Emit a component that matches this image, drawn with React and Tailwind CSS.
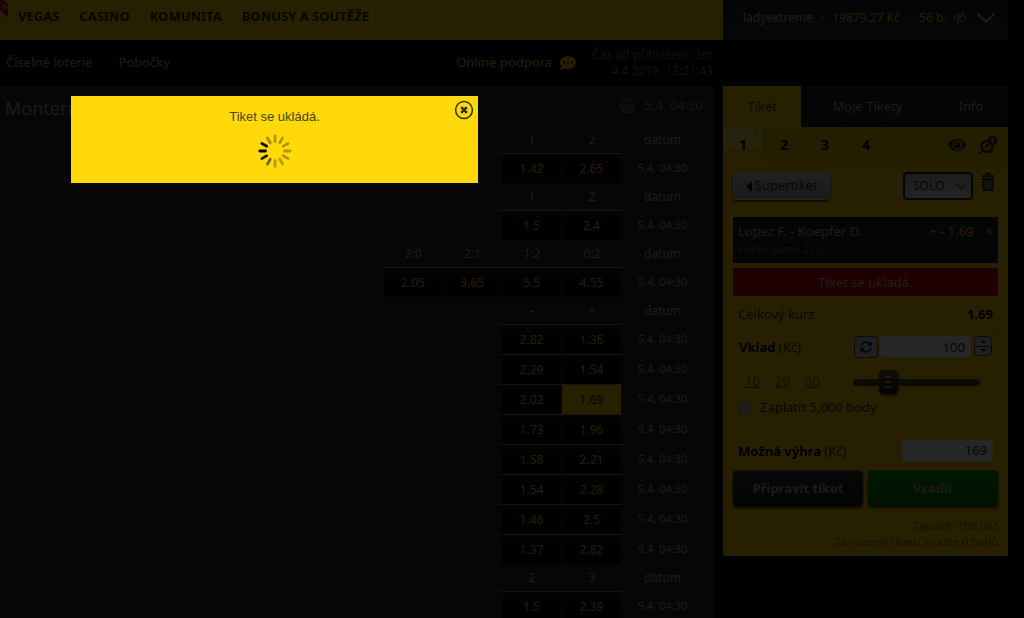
import React from 'react';
import { FaCommentDots, FaSyncAlt } from 'react-icons/fa';

const mainNav = ['VEGAS', 'CASINO', 'KOMUNITA', 'BONUSY A SOUTĚŽE'];
const subNav = ['Číselné loterie', 'Pobočky'];

// Each market has four odds columns, unused ones stay empty
const markets = [
  { heads: ['', '', '1', '2'], rows: [['', '', '1.42', '2.65']] },
  { heads: ['', '', '1', '2'], rows: [['', '', '1.5', '2.4']] },
  { heads: ['2:0', '2:1', '1:2', '0:2'], rows: [['2.05', '3.65', '5.5', '4.55']] },
  {
    heads: ['', '', '-', '+'],
    rows: [
      ['', '', '2.82', '1.36'],
      ['', '', '2.29', '1.54'],
      ['', '', '2.02', '1.69'],
      ['', '', '1.73', '1.96'],
      ['', '', '1.58', '2.21'],
      ['', '', '1.54', '2.28'],
      ['', '', '1.46', '2.5'],
      ['', '', '1.37', '2.82']
    ]
  },
  { heads: ['', '', '2', '3'], rows: [['', '', '1.5', '2.39']] }
];

const selectedOdd = '1.69';

// Opacity of the twelve spinner spokes, clockwise from the top
const spokes = [0.3, 0.3, 0.3, 0.3, 0.3, 0.3, 0.3, 0.55, 0.85, 1, 1, 0.35];

const Spinner = () => (
  <svg className="w-[34px] h-[34px]" viewBox="-16 -16 32 32" role="img" aria-label="Ukládá se">
    {spokes.map((opacity, i) => (
      <line
        key={i}
        x1="0"
        y1="-9"
        x2="0"
        y2="-14.3"
        stroke="#000"
        strokeWidth="2.6"
        strokeLinecap="round"
        strokeOpacity={opacity}
        transform={`rotate(${i * 30})`}
      />
    ))}
  </svg>
);

const EyeIcon = () => (
  <svg className="w-5 h-5" viewBox="0 0 20 20" fill="none">
    <path d="M0.5 10C3 5.6 6.3 3.6 10 3.6S17 5.6 19.5 10C17 14.4 13.7 16.4 10 16.4S3 14.4 0.5 10Z" fill="#3a3418" />
    <circle cx="10" cy="10" r="4.3" stroke="#b39a10" strokeWidth="1.7" />
    <circle cx="9" cy="9" r="1.3" fill="#b39a10" />
  </svg>
);

const PinIcon = () => (
  <svg className="w-5 h-5" viewBox="0 0 20 20" fill="none" stroke="#3a3418">
    <path d="M1.5 18.5 5.5 15" strokeWidth="2" strokeLinecap="round" />
    <circle cx="9" cy="11.3" r="5.6" strokeWidth="2.6" />
    <circle cx="14.5" cy="5.5" r="3.6" strokeWidth="2.4" fill="#b39a10" />
    <path d="M8.5 11.5 13 7" strokeWidth="2.6" strokeLinecap="round" />
  </svg>
);

const TrashIcon = () => (
  <svg className="w-[14px] h-5" viewBox="0 0 14 20" fill="none" stroke="#3a3418">
    <path d="M0 4.2H14M5 3V1.5H9V3" strokeWidth="1.8" />
    <path d="M2 7H12L11.2 18H2.8Z" strokeWidth="2" strokeLinejoin="round" fill="#a89850" />
    <path d="M5.3 8.5V16M8.7 8.5V16" strokeWidth="1.2" />
  </svg>
);

const HiddenIcon = () => (
  <svg className="w-[14px] h-[14px]" viewBox="0 0 14 14" fill="none" stroke="#999">
    <path d="M6.5 3.2C4 3.4 2 4.8 0.8 7C1.6 8.5 2.7 9.7 4.2 10.4M9.8 3.8C11.4 4.5 12.5 5.6 13.2 7C12 9.2 10 10.7 7.5 10.8" strokeWidth="1.5" />
    <path d="M10 0.8 4.4 13.2" strokeWidth="1.6" />
    <path d="M6.2 5C5 5.8 4.7 7.3 5.2 8.6" strokeWidth="1.8" />
  </svg>
);

const StatsIcon = () => (
  <svg className="w-4 h-4" viewBox="0 0 16 16" fill="none" stroke="#777">
    <circle cx="8" cy="8" r="6.8" strokeWidth="1.5" />
    <path d="M4.8 8V12M8 4V13M11.2 6.5V12" strokeWidth="2.2" />
  </svg>
);

const Header = () => (
  <header className="relative shrink-0 h-10 bg-[#ffd800] flex items-center pl-[18px] gap-5 text-[13px] font-bold text-[#332b00] pb-[6px]">
    {/* Ribbon of the previous menu item */}
    <svg className="absolute left-0 top-0 w-2 h-5 overflow-visible" viewBox="0 0 8 20">
      <path d="M0 0H4L8 4V18L0 10Z" fill="#d0102c" />
      <text x="0" y="0" fill="#ddd" fontSize="6" fontWeight="700" transform="translate(2 6) rotate(45)">w</text>
    </svg>
    {mainNav.map((item) => (
      <a key={item} href="#">{item}</a>
    ))}
  </header>
);

const SubHeader = () => (
  <div className="shrink-0 h-[46px] flex items-center justify-between pl-[6px] pr-[10px]">
    <nav className="flex gap-[26px] text-[13px] text-[#b0b0b0]">
      {subNav.map((item) => (
        <a key={item} href="#">{item}</a>
      ))}
    </nav>
    <div className="flex items-center gap-4">
      <a href="#" className="flex items-center gap-2 text-[13px] text-[#ffb900]">
        Online podpora
        <FaCommentDots className="w-4 h-4" />
      </a>
      <div className="text-right text-xs text-[#707070]">
        <p>Čas od přihlášení: 3m</p>
        <p>4.4.2019 &nbsp;13:21:43</p>
      </div>
    </div>
  </div>
);

const OddsCell = ({ value, selected }) => {
  if (!value) return <td className="border-t border-[#484848]"></td>;

  return (
    <td className={`p-0 border-t border-r border-t-[#8a8a8a] border-r-[#303030] ${selected ? 'bg-[#ffd800]' : 'bg-linear-to-b from-[#1c1c1c] to-black'}`}>
      <button type="button" className={`block w-full text-center ${selected ? 'text-[#333]' : 'text-[#ffb900]'}`}>
        {value}
      </button>
    </td>
  );
};

const Matches = () => (
  <section className="bg-[#2a2a2a] mr-[10px] pr-[10px] flex-1">
    <div className="h-10 flex items-center justify-between pl-[5px]">
      <h1 className="pt-1 text-lg text-[#b0b0b0]">Monterrey</h1>
      <div className="flex items-center gap-[10px] text-[13px] text-[#909090]">
        <StatsIcon />
        <span>5.4. 04:30</span>
      </div>
    </div>
    <table className="w-full table-fixed border-separate border-spacing-0 text-xs text-[#b8b8b8]">
      <colgroup>
        <col />
        <col className="w-[59px]" />
        <col className="w-[59px]" />
        <col className="w-[60px]" />
        <col className="w-[60px]" />
        <col className="w-[81px]" />
      </colgroup>
      {markets.map((market, m) => (
        <tbody key={m}>
          <tr className="h-[27px]">
            <td></td>
            {market.heads.map((head, i) => (
              <th key={i} className="p-0 font-normal">{head}</th>
            ))}
            <th className="p-0 font-normal">datum</th>
          </tr>
          {market.rows.map((row, r) => (
            <tr key={r} className="h-[30px] bg-linear-to-b from-[#262727] to-[#2a2a2a]">
              <td className="border-t border-[#484848]"></td>
              {row.map((value, i) => (
                <OddsCell key={i} value={value} selected={value === selectedOdd} />
              ))}
              <td className="p-0 border-t border-[#484848] text-center text-[11px]">5.4. 04:30</td>
            </tr>
          ))}
        </tbody>
      ))}
    </table>
  </section>
);

const UserBar = () => (
  <div className="h-10 bg-linear-to-b from-[#222] to-[#2c2e2e] flex items-center pl-5 pr-3 pb-1 text-xs text-[#ffb900]">
    <span className="text-[#c0c0c0]">ladyextreme</span>
    <span className="mx-2">·</span>
    <span>19879.27 Kč</span>
    <span className="mx-2">·</span>
    <span>56 b.</span>
    <button type="button" aria-label="Skrýt zůstatek" className="ml-[7px]">
      <HiddenIcon />
    </button>
    <button type="button" aria-label="Účet" className="ml-auto">
      <svg className="w-5 h-3" viewBox="0 0 20 12" fill="none">
        <path d="M1.5 1.5 10 9.8 18.5 1.5" stroke="#b0b0b0" strokeWidth="2.4" />
      </svg>
    </button>
  </div>
);

const Ticket = () => (
  <section className="bg-[#ffd800] text-[13px] text-[#333]">
    <div className="h-[41px] grid grid-cols-[78px_1fr_74px] bg-[#222] text-[#b8b8b8]">
      <button type="button" className="bg-[#ffd800] text-[#333]">Tiket</button>
      <button type="button">Moje Tikety</button>
      <button type="button">Info</button>
    </div>

    <div className="h-[35px] flex items-center bg-[#ebc600] text-sm font-bold text-black">
      <button type="button" className="relative w-[41px] h-full border-r border-[#d0ae00] bg-linear-to-b from-[#ffe650] from-60% to-[#ffd800] to-60%">
        1
        <span className="absolute right-1 top-1 text-[8px] leading-2 font-normal text-[#777]">1</span>
      </button>
      <button type="button" className="w-[41px] h-full border-r border-[#d0ae00]">2</button>
      <button type="button" className="w-[41px] h-full border-r border-[#d0ae00]">3</button>
      <button type="button" className="w-[41px] h-full border-r border-[#d0ae00]">4</button>
      <div className="ml-auto mr-[10px] flex gap-[11px]">
        <button type="button" aria-label="Sledovat"><EyeIcon /></button>
        <button type="button" aria-label="Připnout"><PinIcon /></button>
      </div>
    </div>

    <div className="px-[10px] pb-[6px]">
      <div className="h-[55px] flex items-start pt-[10px]">
        <button type="button" className="h-7 w-[97px] flex items-center justify-center gap-[3px] rounded-sm border border-white/60 bg-linear-to-b from-[#e0e0e0] to-[#a8a8a8] shadow-[0_1px_3px_#000] text-[#333]">
          <svg className="w-[6px] h-[11px]" viewBox="0 0 6 11"><path d="M6 0V11L0 5.5Z" fill="#111" /></svg>
          Supertiket
        </button>
        <div className="relative ml-auto">
          <select aria-label="Typ sázky" defaultValue="SOLO" className="appearance-none h-7 w-[70px] pl-[8px] rounded-sm border-2 border-[#222] bg-linear-to-b from-[#bbb] to-[#eee] text-xs text-[#333]">
            <option>SOLO</option>
          </select>
          <svg className="absolute right-[6px] top-[11px] w-3 h-[7px] pointer-events-none" viewBox="0 0 12 7" fill="none">
            <path d="M0.7 0.7 6 6 11.3 0.7" stroke="#444" strokeWidth="1.2" />
          </svg>
        </div>
        <button type="button" aria-label="Smazat tiket" className="ml-2 mr-[3px]"><TrashIcon /></button>
      </div>

      <div className="h-[46px] bg-linear-to-b from-[#24272a] to-[#1a1c1e] px-[5px] py-1">
        <div className="flex items-center leading-5 text-[#b8b8b8]">
          <span>Lopez F. - Koepfer D.</span>
          <span className="ml-auto">+ - <span className="text-[#ffb900]">1.69</span></span>
          <button type="button" aria-label="Odebrat" className="ml-3 leading-4">×</button>
        </div>
        <p className="text-[11px] leading-4 text-[#666]">Počet gamů 21.5</p>
      </div>

      <p className="mt-[5px] h-7 leading-7 bg-[#c80000] text-center text-[#c8c8c8]">Tiket se ukládá.</p>

      <div className="h-[33px] flex items-center justify-between px-[5px] pt-1">
        <span>Celkový kurz</span>
        <span className="font-bold text-black">1.69</span>
      </div>

      <div className="h-[105px] border border-[#e6c000] px-[5px] pt-[6px]">
        <div className="flex items-start">
          <label htmlFor="stake" className="pt-[2px]"><b className="text-black">Vklad</b> (Kč)</label>
          <button type="button" aria-label="Obnovit" className="ml-auto w-6 h-[22px] flex items-center justify-center rounded-sm border border-[#444] bg-[#ccc]">
            <FaSyncAlt className="w-3 h-3 text-[#333]" />
          </button>
          <input id="stake" type="text" defaultValue="100" className="ml-[2px] w-[91px] h-[21px] px-[6px] rounded-sm bg-white text-right" />
          <div className="ml-[3px] w-[18px] h-5 flex flex-col rounded-sm border border-[#444] bg-[#ccc] divide-y divide-[#333]">
            <button type="button" aria-label="Zvýšit" className="flex-1 flex items-center justify-center">
              <svg className="w-[5px] h-[3px]" viewBox="0 0 5 3"><path d="M0 3 2.5 0 5 3Z" fill="#111" /></svg>
            </button>
            <button type="button" aria-label="Snížit" className="flex-1 flex items-center justify-center">
              <svg className="w-[5px] h-[3px]" viewBox="0 0 5 3"><path d="M0 0 2.5 3 5 0Z" fill="#111" /></svg>
            </button>
          </div>
        </div>
        <div className="mt-3 flex items-center pl-[6px] pr-3">
          <div className="flex gap-[15px] text-[#555]">
            <button type="button" className="underline">10</button>
            <button type="button" className="underline">20</button>
            <button type="button" className="underline">30</button>
          </div>
          <div className="relative ml-auto w-[127px] h-6 flex items-center">
            <input type="range" aria-label="Výše vkladu" defaultValue="22" className="absolute inset-0 w-full opacity-0" />
            <div className="w-full h-[7px] rounded-full bg-[#554a10]"></div>
            <div className="absolute left-[26px] top-0 w-[18px] h-6 rounded-sm bg-linear-to-b from-[#665c20] to-[#1c1c10] shadow-[1px_1px_3px_#000] flex flex-col items-center justify-center gap-[3px] pointer-events-none">
              <i className="block w-[6px] h-[2px] bg-[#aaa]"></i>
              <i className="block w-[6px] h-[2px] bg-[#aaa]"></i>
              <i className="block w-[6px] h-[2px] bg-[#aaa]"></i>
            </div>
          </div>
        </div>
        <label className="mt-1 flex items-center gap-[10px]">
          <input type="checkbox" className="appearance-none w-[11px] h-[11px] rounded-xs border border-[#999] bg-[#ccc]" />
          Zaplatit 5,000 body
        </label>
      </div>

      <div className="h-9 flex items-center justify-between px-[5px]">
        <label htmlFor="win"><b className="text-black">Možná výhra</b> (Kč)</label>
        <input id="win" type="text" readOnly value="169" className="mb-1 w-[91px] h-[21px] px-[6px] rounded-sm bg-white text-right" />
      </div>

      <div className="grid grid-cols-2 gap-[5px] font-bold text-[#b0b0b0]">
        <button type="button" className="h-9 rounded-sm border-t border-[#777] bg-linear-to-b from-[#303236] to-[#1c1c20] shadow-[0_2px_3px_#222]">Připravit tiket</button>
        <button type="button" className="h-9 rounded-sm border-t border-[#3c9a3c] bg-linear-to-b from-[#009c00] to-[#007400] shadow-[0_2px_3px_#222]">Vsadit</button>
      </div>

      <div className="mt-3 text-right text-[11px] leading-4 text-[#7a6a10]">
        <p>Zaplatit: 100.0Kč</p>
        <p>Za vsazení tiketu získáte 0 bodů</p>
      </div>
    </div>
  </section>
);

const SavingDialog = () => (
  <div role="dialog" aria-label="Tiket se ukládá." className="absolute z-20 left-[71px] top-24 w-[407px] h-[87px] bg-[#ffd90a] flex flex-col items-center pt-[13px] gap-[9px] font-['Liberation_Sans',sans-serif]">
    <p className="text-[13px] leading-4 text-[#4a4420]">Tiket se ukládá.</p>
    <Spinner />
    <button type="button" aria-label="Zavřít" className="absolute right-1 top-1">
      <svg className="w-5 h-5" viewBox="0 0 20 20" fill="none" stroke="#333010">
        <circle cx="10" cy="10" r="8.4" strokeWidth="1.5" />
        <path d="M7.2 7.2 12.8 12.8M12.8 7.2 7.2 12.8" strokeWidth="2.6" />
      </svg>
    </button>
  </div>
);

const App = () => (
  <div className="relative h-screen overflow-hidden bg-black flex font-['Noto_Sans',sans-serif]">
    <main className="flex-1 min-w-0 flex flex-col">
      <Header />
      <SubHeader />
      <Matches />
    </main>
    <aside className="w-[285px] mr-4">
      <UserBar />
      <div className="mt-[46px]">
        <Ticket />
      </div>
    </aside>
    {/* Backdrop */}
    <div className="absolute inset-0 z-10 bg-black/85"></div>
    <SavingDialog />
  </div>
);

export default App;
